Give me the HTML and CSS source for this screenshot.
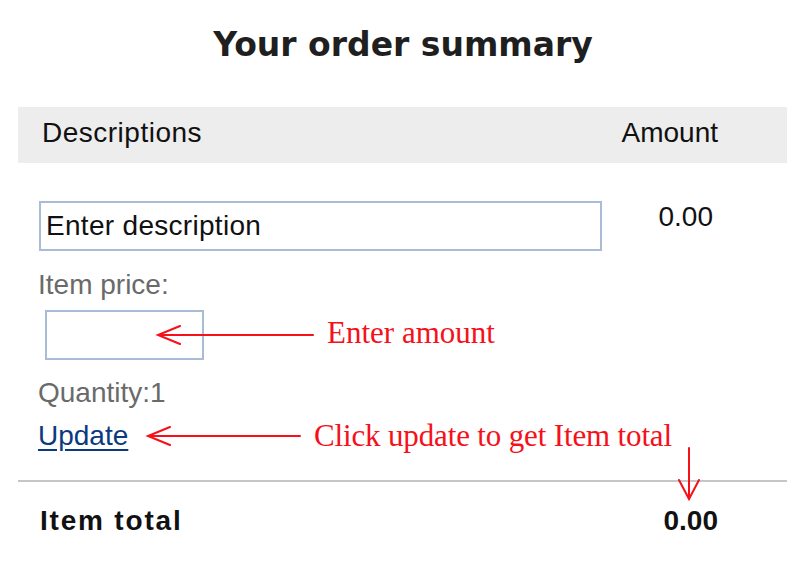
FILE: index.html
```html
<!DOCTYPE html>
<html>
<head>
<meta charset="utf-8">
<link rel="stylesheet" href="styles.css">
</head>
<body>
<div class="page">
  <h1 class="title">Your order summary</h1>
  <div class="summary">
    <div class="head">
      <span class="head-desc">Descriptions</span>
      <span>Amount</span>
    </div>
    <div class="item">
      <div class="fields">
        <input class="desc" type="text" value="Enter description">
        <div class="label">Item price:</div>
        <input class="price" type="text" value="">
        <div class="label qty">Quantity:1</div>
        <a class="update" href="#">Update</a>
      </div>
      <div class="amount">0.00</div>
    </div>
    <div class="total">
      <span class="total-label">Item total</span>
      <span class="total-val">0.00</span>
    </div>
  </div>

  <svg class="arrows" width="800" height="581" viewBox="0 0 800 581">
    <g stroke="#f5101a" stroke-width="2" fill="none" stroke-linecap="round">
      <path d="M158 335 H313 M180 326 L158 335 L180 344"/>
      <path d="M148 436 H300 M170 427 L148 436 L170 445"/>
      <path d="M689 448 V499 M679 480 L689 499 L699 480"/>
    </g>
  </svg>
  <span class="note note-amount">Enter amount</span>
  <span class="note note-update">Click update to get Item total</span>
</div>
</body>
</html>
```

FILE: styles.css
```css
* { box-sizing: border-box; }
html, body { margin: 0; padding: 0; background: #fff; }
body {
  font-family: "Liberation Sans", Arial, sans-serif;
  font-size: 28px;
  color: #111;
}
.page {
  position: relative;
  width: 800px;
  height: 581px;
  overflow: hidden;
}
.title {
  margin: 0;
  padding-top: 25px;
  padding-left: 6px;
  font-family: "DejaVu Sans", Verdana, sans-serif;
  font-weight: bold;
  font-size: 33px;
  line-height: 40px;
  text-align: center;
  color: #1f1f1f;
}
.summary {
  margin-left: 18px;
  width: 769px;
}
.head {
  margin-top: 42px;
  height: 56px;
  background: #ededed;
  display: flex;
  justify-content: space-between;
  align-items: center;
  padding: 0 69px 4px 24px;
  line-height: 32px;
  color: #111;
}
.head-desc { letter-spacing: 0.5px; }
.item {
  margin-top: 38px;
  display: flex;
  justify-content: space-between;
  align-items: flex-start;
  padding: 0 74px 0 0;
}
.fields {
  display: flex;
  flex-direction: column;
  align-items: flex-start;
}
input {
  font-family: "Liberation Sans", Arial, sans-serif;
  font-size: 28px;
  color: #111;
  border: 2px solid #a9bcd6;
  background: #fff;
  outline: none;
  margin: 0;
}
.desc {
  margin-left: 21px;
  width: 563px;
  height: 50px;
  padding: 0 5px;
  letter-spacing: 0.3px;
}
.label {
  margin-top: 18px;
  margin-left: 20px;
  line-height: 32px;
  color: #6a6a6a;
}
.price {
  margin-top: 9px;
  margin-left: 27px;
  width: 159px;
  height: 50px;
}
.qty { margin-top: 17px; }
.update {
  margin-top: 11px;
  margin-left: 20px;
  line-height: 32px;
  color: #0c3a80;
  text-decoration: underline;
  text-underline-offset: 4px;
}
.amount {
  margin-top: 0;
  line-height: 32px;
  color: #111;
}
.total {
  margin-top: 28px;
  border-top: 2px solid #c6c6c6;
  padding: 23px 69px 0 22px;
  display: flex;
  justify-content: space-between;
  font-weight: bold;
  line-height: 32px;
  color: #111;
}
.total-label { letter-spacing: 1.8px; }
.arrows {
  position: absolute;
  left: 0;
  top: 0;
  pointer-events: none;
}
.note {
  position: absolute;
  font-family: "Liberation Serif", "Times New Roman", serif;
  font-size: 31px;
  line-height: 36px;
  color: #f5101a;
  white-space: nowrap;
}
.note-amount { left: 327px; top: 315px; }
.note-update { left: 314px; top: 418px; letter-spacing: -0.15px; }
```
